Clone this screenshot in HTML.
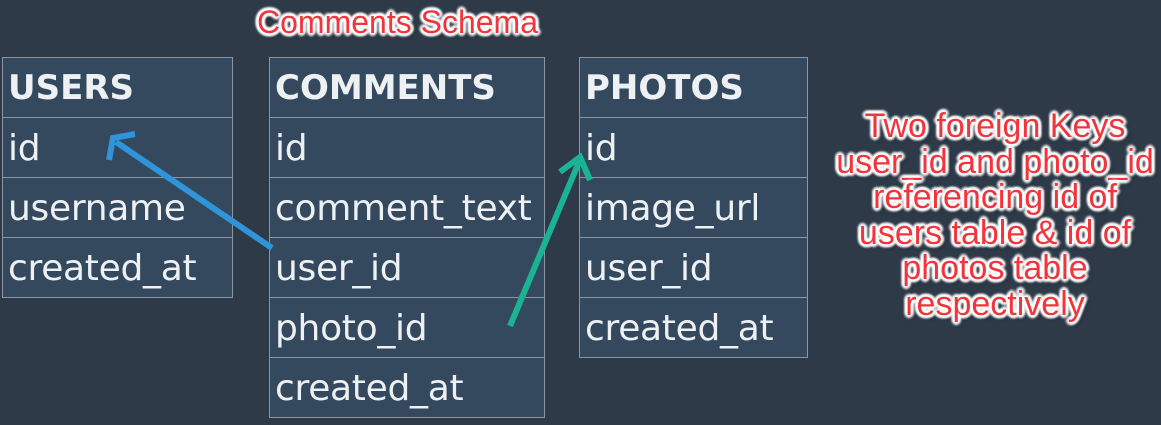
<!DOCTYPE html>
<html><head><meta charset="utf-8"><style>
body{margin:0;width:1161px;height:425px;background:#2e3a48;overflow:hidden;position:relative;font-family:"DejaVu Sans","Liberation Sans",sans-serif}
.t{position:absolute}
.t div{height:59px;border:1px solid #8a96a3;border-top:none;background:#34495e;color:#eef1f4;font-size:36px;line-height:61px;padding-left:5px;white-space:nowrap;letter-spacing:-0.3px}
.t div:first-child{border-top:1px solid #8a96a3}
.t div.h{font-weight:bold;font-size:34px;letter-spacing:0}
.r{position:absolute;color:#f2353d;font-family:"Liberation Sans",Arial,sans-serif;text-shadow:0 0 2px #fff,0 0 2px #fff,2px 2px 2px #fff,-2px -2px 2px #fff,2px -2px 2px #fff,-2px 2px 2px #fff,3px 0 2px #fff,-3px 0 2px #fff,0 3px 2px #fff,0 -3px 2px #fff,3px 3px 4px rgba(0,0,0,.5);}
</style></head><body>
<div class="t" style="left:2px;top:57px;width:231px"><div class="h">USERS</div><div>id</div><div>username</div><div>created_at</div></div>
<div class="t" style="left:269px;top:57px;width:276px"><div class="h">COMMENTS</div><div>id</div><div>comment_text</div><div>user_id</div><div>photo_id</div><div>created_at</div></div>
<div class="t" style="left:579px;top:57px;width:229px"><div class="h">PHOTOS</div><div>id</div><div>image_url</div><div>user_id</div><div>created_at</div></div>
<div class="r" style="left:257px;top:4px;font-size:32px">Comments Schema</div>
<div class="r" style="left:820px;top:109px;width:350px;text-align:center;font-size:34px;line-height:35.5px">Two foreign Keys<br>user_id and photo_id<br>referencing id of<br>users table &amp; id of<br>photos table<br>respectively</div>
<svg style="position:absolute;left:0;top:0" width="1161" height="425">
<g stroke="#3094d8" stroke-width="6" fill="none">
<line x1="272" y1="248" x2="116" y2="142"/>
<polyline points="109,160 113,138 135,134"/>
</g>
<g stroke="#1ab394" stroke-width="6" fill="none">
<line x1="510" y1="326" x2="579" y2="162"/>
<polyline points="560,172 580,157 590,180"/>
</g>
</svg>
</body></html>
